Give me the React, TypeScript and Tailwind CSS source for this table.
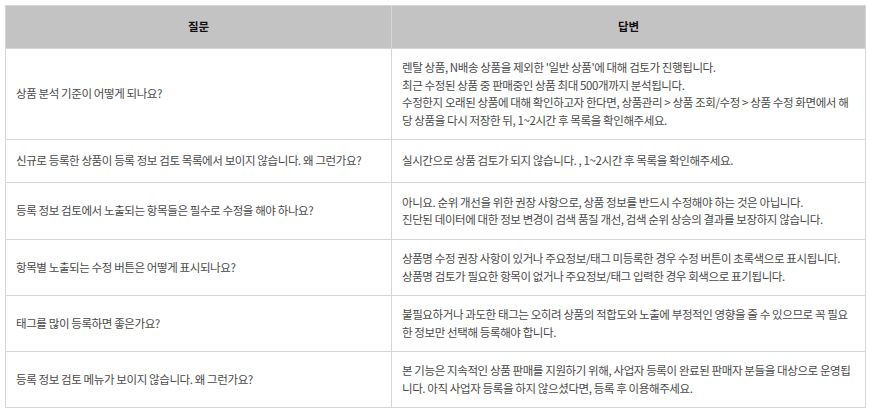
import React from "react";

const rows: { q: string; a: string[]; h: string }[] = [
  {
    q: "상품 분석 기준이 어떻게 되나요?",
    a: [
      "렌탈 상품, N배송 상품을 제외한 '일반 상품'에 대해 검토가 진행됩니다.",
      "최근 수정된 상품 중 판매중인 상품 최대 500개까지 분석됩니다.",
      "수정한지 오래된 상품에 대해 확인하고자 한다면, 상품관리 > 상품 조회/수정 > 상품 수정 화면에서 해당 상품을 다시 저장한 뒤, 1~2시간 후 목록을 확인해주세요.",
    ],
    h: "h-[91px]",
  },
  {
    q: "신규로 등록한 상품이 등록 정보 검토 목록에서 보이지 않습니다. 왜 그런가요?",
    a: ["실시간으로 상품 검토가 되지 않습니다. , 1~2시간 후 목록을 확인해주세요."],
    h: "h-[43px]",
  },
  {
    q: "등록 정보 검토에서 노출되는 항목들은 필수로 수정을 해야 하나요?",
    a: [
      "아니요. 순위 개선을 위한 권장 사항으로, 상품 정보를 반드시 수정해야 하는 것은 아닙니다.",
      "진단된 데이터에 대한 정보 변경이 검색 품질 개선, 검색 순위 상승의 결과를 보장하지 않습니다.",
    ],
    h: "h-[57px]",
  },
  {
    q: "항목별 노출되는 수정 버튼은 어떻게 표시되나요?",
    a: [
      "상품명 수정 권장 사항이 있거나 주요정보/태그 미등록한 경우 수정 버튼이 초록색으로 표시됩니다.",
      "상품명 검토가 필요한 항목이 없거나 주요정보/태그 입력한 경우 회색으로 표기됩니다.",
    ],
    h: "h-[56px]",
  },
  {
    q: "태그를 많이 등록하면 좋은가요?",
    a: [
      "불필요하거나 과도한 태그는 오히려 상품의 적합도와 노출에 부정적인 영향을 줄 수 있으므로 꼭 필요한 정보만 선택해 등록해야 합니다.",
    ],
    h: "h-[56px]",
  },
  {
    q: "등록 정보 검토 메뉴가 보이지 않습니다. 왜 그런가요?",
    a: [
      "본 기능은 지속적인 상품 판매를 지원하기 위해, 사업자 등록이 완료된 판매자 분들을 대상으로 운영됩니다. 아직 사업자 등록을 하지 않으셨다면, 등록 후 이용해주세요.",
    ],
    h: "h-[56px]",
  },
];

export default function App() {
  return (
    <div
      className="w-[869px] h-[412px] bg-white pt-[5px] pl-[5px]"
      style={{ fontFamily: '"Noto Sans CJK KR", "Noto Sans", sans-serif' }}
    >
      <table className="w-[860px] border-collapse table-fixed text-[11.5px] leading-[17.5px] text-[#4a4a4a]">
        <colgroup>
          <col className="w-[386px]" />
          <col className="w-[474px]" />
        </colgroup>
        <thead>
          <tr className="h-[43px] bg-[#c3c3c3]">
            <th className="border border-[#d6d6d6] font-bold text-[#111] text-center align-middle">질문</th>
            <th className="border border-[#d6d6d6] font-bold text-[#111] text-center align-middle">답변</th>
          </tr>
        </thead>
        <tbody>
          {rows.map((r, i) => (
            <tr key={i} className={r.h}>
              <td className="border border-[#d6d6d6] px-[10px] align-middle tracking-[-0.4px]">{r.q}</td>
              <td className="border border-[#d6d6d6] px-[10px] align-middle tracking-[-0.4px] break-all">
                {r.a.map((line, j) => (
                  <div key={j}>{line}</div>
                ))}
              </td>
            </tr>
          ))}
        </tbody>
      </table>
    </div>
  );
}
